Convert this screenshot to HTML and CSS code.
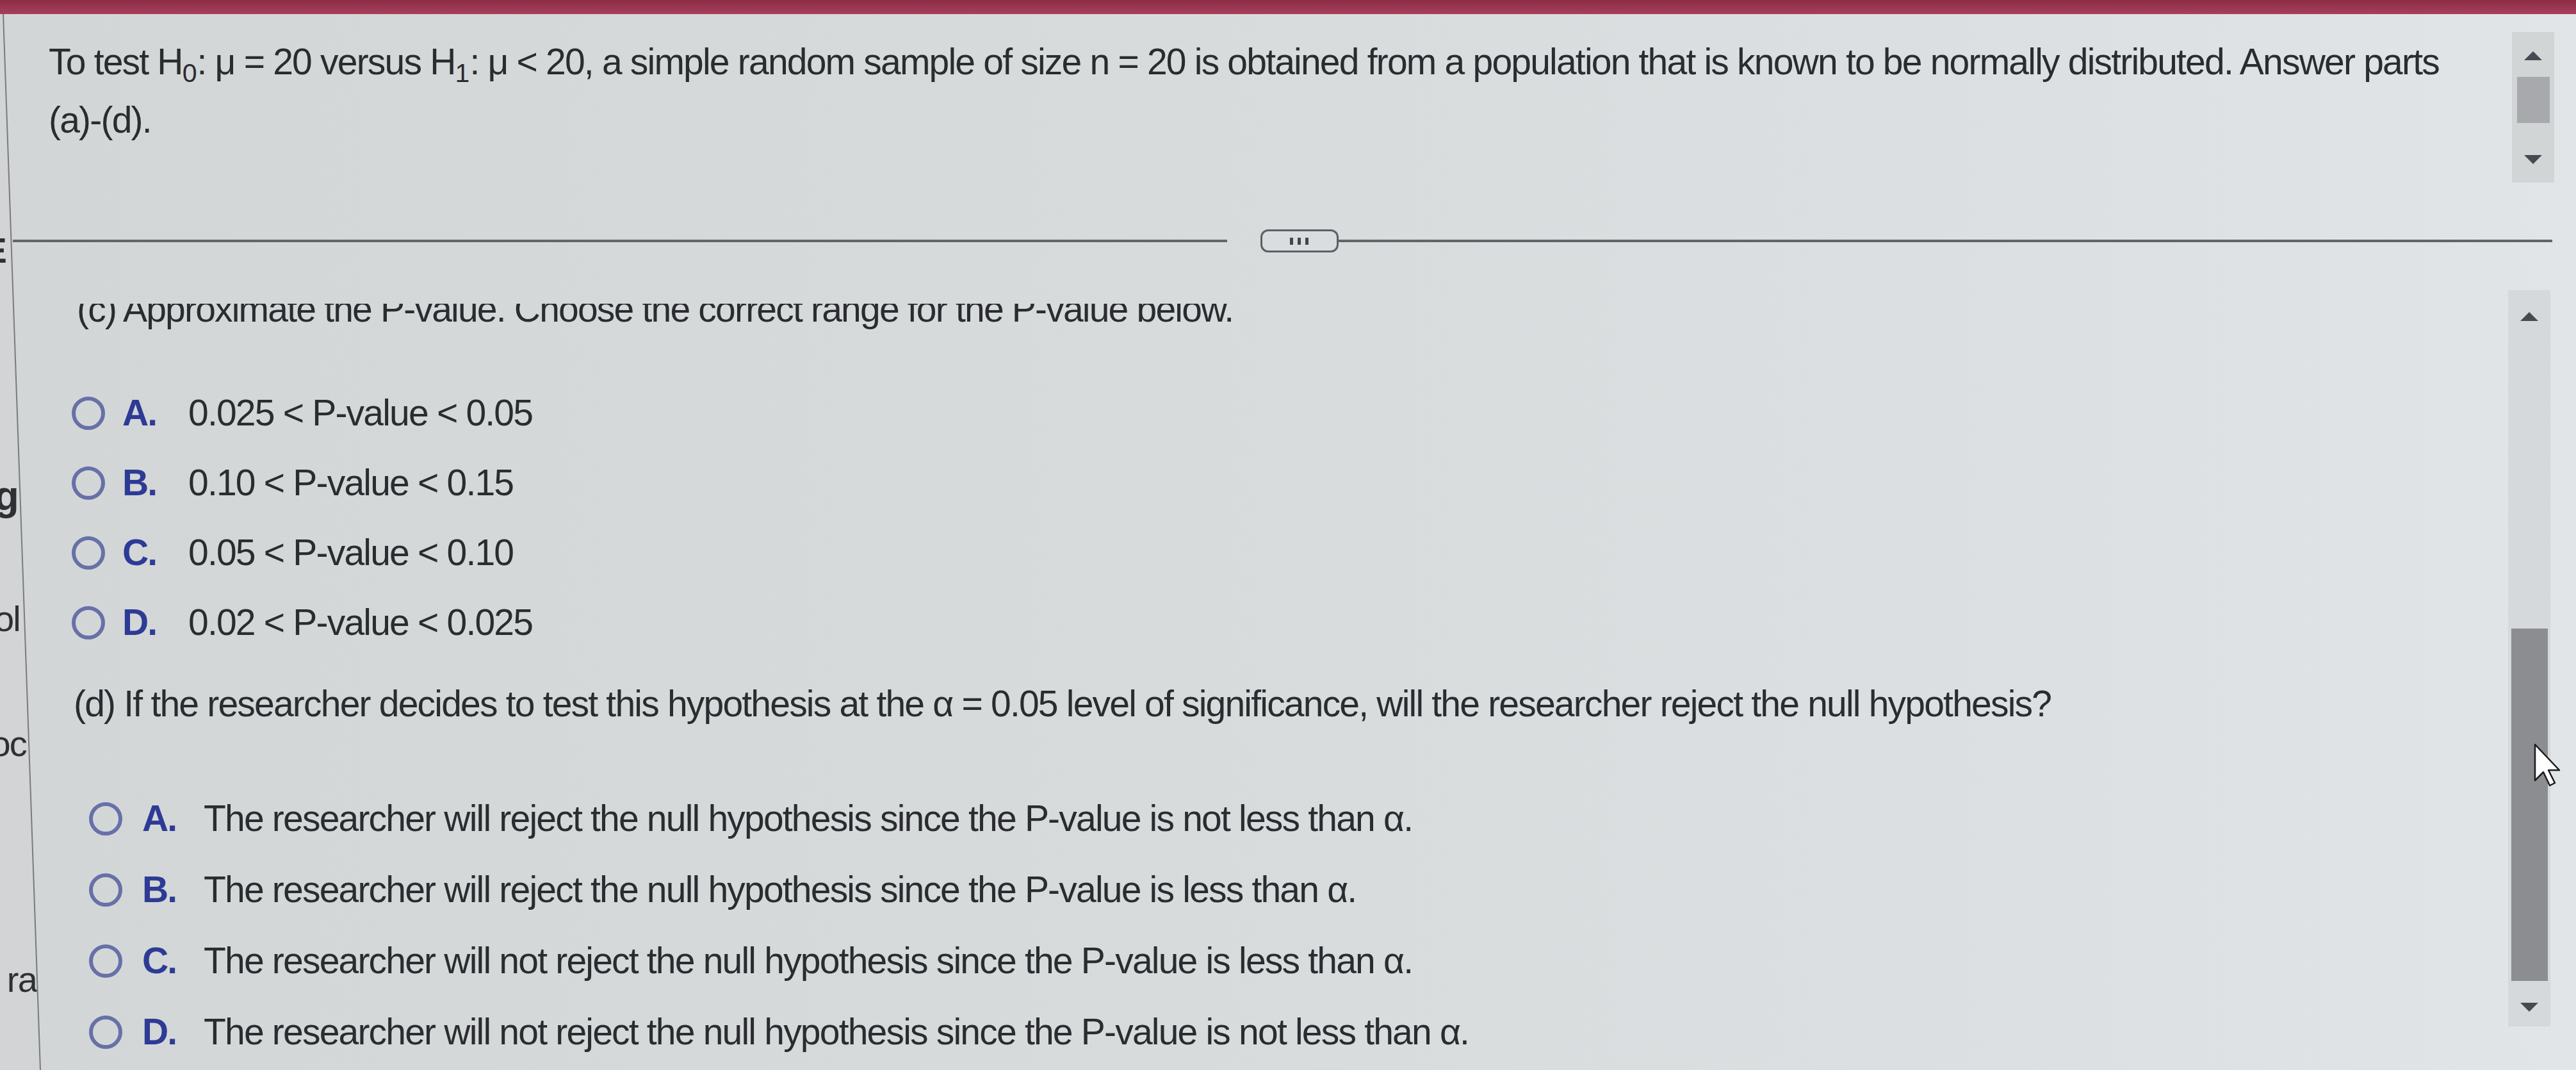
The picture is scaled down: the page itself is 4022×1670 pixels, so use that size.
FILE: index.html
```html
<!DOCTYPE html>
<html lang="en">
<head>
<meta charset="utf-8">
<title>Hypothesis test</title>
<link rel="stylesheet" href="styles.css">
</head>
<body>
  <div class="topbar"></div>

  <section class="question-pane">
    <p class="question-text">To test H<span class="sub">0</span>: μ = 20 versus H<span class="sub">1</span>: μ &lt; 20, a simple random sample of size n = 20 is obtained from a population that is known to be normally distributed. Answer parts (a)-(d).</p>
    <div class="scrollbar sb-top">
      <span class="arrow up"></span>
      <span class="thumb"></span>
      <span class="arrow down"></span>
    </div>
  </section>

  <div class="divider">
    <span class="rule"></span>
    <button class="more" type="button"><i></i><i></i><i></i></button>
    <span class="rule"></span>
  </div>

  <section class="answer-pane">
    <div class="viewport">
      <div class="scroll-content">
        <p class="part part-c">(c) Approximate the P-value. Choose the correct range for the P-value below.</p>
        <ul class="choices choices-c">
          <li class="option"><span class="radio"></span><span class="label">A.</span><span class="text">0.025 &lt; P-value &lt; 0.05</span></li>
          <li class="option"><span class="radio"></span><span class="label">B.</span><span class="text">0.10 &lt; P-value &lt; 0.15</span></li>
          <li class="option"><span class="radio"></span><span class="label">C.</span><span class="text">0.05 &lt; P-value &lt; 0.10</span></li>
          <li class="option"><span class="radio"></span><span class="label">D.</span><span class="text">0.02 &lt; P-value &lt; 0.025</span></li>
        </ul>
        <p class="part part-d">(d) If the researcher decides to test this hypothesis at the α = 0.05 level of significance, will the researcher reject the null hypothesis?</p>
        <ul class="choices choices-d">
          <li class="option"><span class="radio"></span><span class="label">A.</span><span class="text">The researcher will reject the null hypothesis since the P-value is not less than α.</span></li>
          <li class="option"><span class="radio"></span><span class="label">B.</span><span class="text">The researcher will reject the null hypothesis since the P-value is less than α.</span></li>
          <li class="option"><span class="radio"></span><span class="label">C.</span><span class="text">The researcher will not reject the null hypothesis since the P-value is less than α.</span></li>
          <li class="option"><span class="radio"></span><span class="label">D.</span><span class="text">The researcher will not reject the null hypothesis since the P-value is not less than α.</span></li>
        </ul>
      </div>
    </div>
    <div class="scrollbar sb-bottom">
      <span class="arrow up"></span>
      <span class="thumb"></span>
      <span class="arrow down"></span>
    </div>
  </section>

  <svg class="backdrop" width="90" height="1670" viewBox="0 0 90 1670" aria-hidden="true">
    <defs>
      <clipPath id="behind">
        <polygon points="0,22 4,22 62,1670 0,1670"/>
      </clipPath>
    </defs>
    <polygon points="0,22 4,22 62,1670 0,1670" fill="#d2d4d5"/>
    <g clip-path="url(#behind)" class="frag">
      <text x="9" y="410" text-anchor="end" font-weight="bold">E</text>
      <text x="28" y="796" text-anchor="end" font-weight="bold" class="big">g</text>
      <text x="31" y="985" text-anchor="end">ol</text>
      <text x="41" y="1180" text-anchor="end">oc</text>
      <text x="57" y="1548" text-anchor="end">ra</text>
    </g>
    <line x1="5" y1="22" x2="63" y2="1670" stroke="#7a7b7e" stroke-width="2"/>
  </svg>

  <svg class="cursor" width="44" height="70" viewBox="0 0 44 70" aria-hidden="true">
    <polygon points="2,2 2,58 15,45 25,66 33,62 23,42 40,42" fill="#ffffff" stroke="#1b1b1b" stroke-width="2.5" stroke-linejoin="round"/>
  </svg>
</body>
</html>
```

FILE: styles.css
```css
* {
  box-sizing: border-box;
  margin: 0;
  padding: 0;
}

html,
body {
  width: 4022px;
  height: 1670px;
  overflow: hidden;
}

body {
  position: relative;
  font-family: "Liberation Sans", Arial, sans-serif;
  font-size: 57px;
  letter-spacing: -1.8px;
  color: #2a2c30;
  background: linear-gradient(90deg, #d3d6d7 0%, #d8dbdc 45%, #dde0e2 80%, #e1e5e7 100%);
}

/* top window bar */
.topbar {
  height: 22px;
  background: linear-gradient(#8c2c46, #a83f5c);
}

/* question area */
.question-pane {
  display: flex;
  height: 336px;
}

.question-text {
  flex: 1;
  padding: 29px 60px 0 76px;
  line-height: 91px;
}

.sub {
  font-size: 0.72em;
  vertical-align: -0.3em;
  line-height: 0;
  letter-spacing: 0;
}

/* scrollbars */
.scrollbar {
  display: flex;
  flex-direction: column;
  align-items: center;
  flex: none;
  width: 66px;
}

.arrow {
  width: 0;
  height: 0;
  border-left: 14px solid transparent;
  border-right: 14px solid transparent;
}

.arrow.up {
  border-bottom: 14px solid #474953;
}

.arrow.down {
  border-top: 14px solid #474953;
}

.sb-top {
  height: 235px;
  margin: 28px 34px 0 0;
  padding-top: 30px;
  background: #d2d5d6;
}

.sb-top .thumb {
  width: 51px;
  height: 72px;
  margin: 26px 0 50px;
  background: #a7a9ac;
}

.sb-bottom {
  height: 1149px;
  margin-right: 40px;
  padding-top: 34px;
  background: #d6d9db;
}

.sb-bottom .thumb {
  width: 57px;
  height: 550px;
  margin: 480px 0 34px;
  background: #8b8d90;
}

/* divider with the "more" handle */
.divider {
  display: flex;
  align-items: center;
  height: 36px;
  margin: 0 37px 0 20px;
}

.rule {
  flex: 1;
  height: 4px;
  background: #64656a;
}

.more {
  display: flex;
  align-items: center;
  justify-content: center;
  gap: 7px;
  width: 122px;
  height: 36px;
  margin-left: 52px;
  border: 3px solid #5f6065;
  border-radius: 12px;
  background: #dadddf;
}

.more i {
  display: block;
  width: 5px;
  height: 11px;
  background: #45464b;
}

/* answer area */
.answer-pane {
  display: flex;
  height: 1216px;
  margin-top: 59px;
}

.viewport {
  flex: 1;
  margin-top: 21px;
  overflow: hidden;
}

.scroll-content {
  margin-top: -37px;
}

.part {
  line-height: 91px;
}

.part-c {
  padding-left: 120px;
}

.part-d {
  margin-top: 27px;
  padding-left: 115px;
}

.choices {
  list-style: none;
}

.option {
  display: flex;
  align-items: center;
  white-space: nowrap;
}

.radio {
  flex: none;
  width: 52px;
  height: 52px;
  border: 6px solid #6870a8;
  border-radius: 50%;
}

.label {
  flex: none;
  font-weight: bold;
  color: #2d3b95;
}

.choices-c {
  margin-top: 62px;
  padding-left: 112px;
}

.choices-c .option {
  height: 109px;
  line-height: 109px;
}

.choices-c .label {
  width: 130px;
  padding-left: 27px;
}

.choices-d {
  margin-top: 78px;
  padding-left: 139px;
}

.choices-d .option {
  height: 111px;
  line-height: 111px;
}

.choices-d .label {
  width: 127px;
  padding-left: 31px;
}

/* background window edge and pointer */
.backdrop {
  position: absolute;
  left: 0;
  top: 0;
}

.frag text {
  font-family: "Liberation Sans", Arial, sans-serif;
  font-size: 56px;
  fill: #2f3033;
}

.frag .big {
  font-size: 64px;
}

.cursor {
  position: absolute;
  left: 3956px;
  top: 1160px;
}
```
